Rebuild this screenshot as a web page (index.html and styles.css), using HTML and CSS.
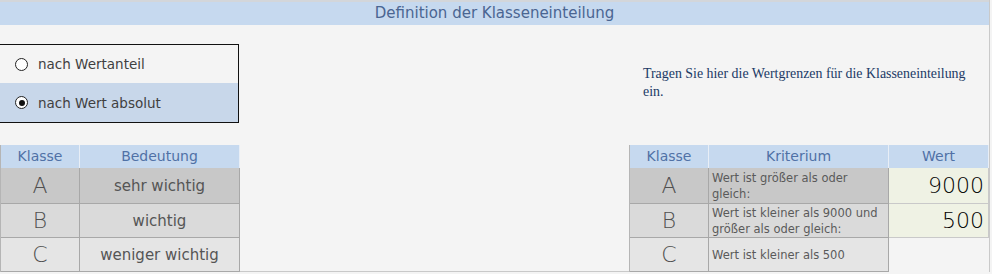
FILE: index.html
```html
<!DOCTYPE html>
<html lang="de">
<head>
<meta charset="utf-8">
<title>Klasseneinteilung</title>
<link rel="stylesheet" href="styles.css">
</head>
<body>
<div class="sheet">
  <div class="title">Definition der Klasseneinteilung</div>
  <div class="middle">
    <div class="options">
      <div class="opt"><span class="radio"></span><span>nach Wertanteil</span></div>
      <div class="opt selected"><span class="radio checked"></span><span>nach Wert absolut</span></div>
    </div>
    <p class="hint">Tragen Sie hier die Wertgrenzen für die Klasseneinteilung ein.</p>
  </div>
  <div class="tables">
    <div class="grid left">
      <div class="hd">Klasse</div><div class="hd">Bedeutung</div>
      <div class="c big ra">A</div><div class="c ra">sehr wichtig</div>
      <div class="c big rb">B</div><div class="c rb">wichtig</div>
      <div class="c big rc">C</div><div class="c rc">weniger wichtig</div>
    </div>
    <div class="grid right">
      <div class="hd">Klasse</div><div class="hd">Kriterium</div><div class="hd">Wert</div>
      <div class="c big ra">A</div><div class="c crit ra">Wert ist größer als oder gleich:</div><div class="c val">9000</div>
      <div class="c big rb">B</div><div class="c crit rb">Wert ist kleiner als 9000 und größer als oder gleich:</div><div class="c val">500</div>
      <div class="c big rc">C</div><div class="c crit rc one">Wert ist kleiner als 500</div><div class="c empty"></div>
    </div>
  </div>
</div>
</body>
</html>
```
FILE: styles.css
```css
html, body {
  margin: 0;
  padding: 0;
  background: #f4f4f4;
}
body {
  width: 992px;
  height: 274px;
  overflow: hidden;
  font-family: "DejaVu Sans", "Liberation Sans", sans-serif;
}
.sheet {
  width: 989px;
  height: 271px;
  border-right: 1px solid #c9c9c9;
  border-bottom: 1px solid #c9c9c9;
  background: #f4f4f4;
}
.title {
  height: 23px;
  border-top: 2px solid #d3d6da;
  background: #c6d9ef;
  color: #4a6592;
  font-size: 15px;
  line-height: 23px;
  text-align: center;
}
.middle {
  height: 118px;
  display: flex;
  justify-content: space-between;
  align-items: flex-start;
}
.options {
  margin-top: 19px;
  width: 238px;
  border: 1px solid #111;
  border-left: none;
}
.opt {
  height: 38px;
  display: flex;
  align-items: center;
  gap: 10px;
  padding-left: 15px;
  font-size: 13.5px;
  color: #404040;
}
.opt.selected {
  background: #c8d7ea;
  height: 39px;
}
.radio {
  width: 11px;
  height: 11px;
  border: 1px solid #222;
  border-radius: 50%;
  background: #fff;
  position: relative;
}
.radio.checked::after {
  content: "";
  position: absolute;
  left: 2.5px;
  top: 2.5px;
  width: 6px;
  height: 6px;
  border-radius: 50%;
  background: #111;
}
.hint {
  margin: 40px 13px 0 0;
  width: 333px;
  font-family: "Liberation Serif", serif;
  font-size: 13.9px;
  line-height: 18px;
  color: #213a66;
}
.tables {
  display: flex;
  justify-content: space-between;
  margin-top: 2px;
}
.grid {
  display: grid;
  grid-template-rows: 23px 36px 34px 34px;
  border-left: 1px solid #b5b5b5;
}
.left { grid-template-columns: 79px 160px; }
.right { grid-template-columns: 79px 180px 100px; margin-left: 0; }
.hd {
  background: #c6d9ef;
  color: #5071a6;
  font-size: 14px;
  text-align: center;
  line-height: 23px;
  border-right: 1px solid #e8eef6;
}
.c {
  display: flex;
  align-items: center;
  justify-content: center;
  color: #555;
  font-size: 15px;
  border-right: 1px solid #a8a8a8;
  border-bottom: 1px solid #a8a8a8;
}
.big {
  font-size: 22px;
  font-weight: 300;
  color: #505050;
}
.ra { background: #c8c8c8; }
.rb { background: #dadada; }
.rc { background: #e5e5e5; }
.crit {
  justify-content: flex-start;
  font-size: 11.5px;
  line-height: 16px;
  padding: 0 3px;
  color: #5a5a5a;
}
.val {
  background: #eff2e4;
  justify-content: flex-end;
  padding-right: 4px;
  font-size: 22px;
  font-weight: 200;
  color: #000;
  border-right: 1px solid #c9c9c9;
  border-bottom: 1px solid #c9c9c9;
}
.empty {
  background: #f4f4f4;
  border-right: none;
  border-bottom: none;
}
```
